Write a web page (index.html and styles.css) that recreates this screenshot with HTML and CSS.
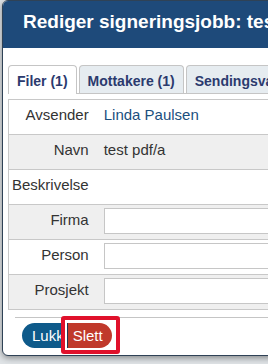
FILE: index.html
```html
<!DOCTYPE html>
<html lang="no">

<head>
    <meta charset="UTF-8">
    <meta name="viewport" content="width=device-width, initial-scale=1.0">
    <title>Rediger signeringsjobb</title>
    <link rel="stylesheet" href="styles.css">
</head>

<body>
    <div class="dialog">
        <div class="dialog-header">
            <span class="dialog-title">Rediger signeringsjobb: test pdf/a</span>
        </div>
        <div class="dialog-body">
            <ul class="tabs">
                <li class="tab active">Filer (1)</li>
                <li class="tab">Mottakere (1)</li>
                <li class="tab">Sendingsvalg</li>
            </ul>
            <div class="tab-panel">
                <table class="job-table">
                    <tr>
                        <td class="label">Avsender</td>
                        <td class="value sender">Linda Paulsen</td>
                    </tr>
                    <tr class="odd">
                        <td class="label">Navn</td>
                        <td class="value">test pdf/a</td>
                    </tr>
                    <tr>
                        <td class="label">Beskrivelse</td>
                        <td class="value"></td>
                    </tr>
                    <tr class="odd">
                        <td class="label">Firma</td>
                        <td class="field"><input type="text" class="text-input"></td>
                    </tr>
                    <tr>
                        <td class="label">Person</td>
                        <td class="field"><input type="text" class="text-input"></td>
                    </tr>
                    <tr class="odd">
                        <td class="label">Prosjekt</td>
                        <td class="field"><input type="text" class="text-input"></td>
                    </tr>
                </table>
            </div>
            <div class="button-pane">
                <button class="btn btn-close">Lukk</button>
                <span class="highlight">
                    <button class="btn btn-delete">Slett</button>
                </span>
            </div>
        </div>
    </div>
</body>

</html>
```

FILE: styles.css
```css
html,
body {
    margin: 0;
    font-family: "Liberation Sans", Arial, sans-serif;
    font-size: 15px;
    overflow: hidden;
}

body {
    background: #dfe3e6;
    height: 364px;
}

.dialog {
    width: 460px;
    margin-left: 2px;
    border: 1px solid #2f4256;
    border-radius: 6px;
    background: #fff;
    box-shadow: 0 2px 6px rgba(0, 0, 0, 0.4);
    overflow: hidden;
}

.dialog-header {
    background: #1e4a7a;
    padding: 10px 0 15px 20px;
    white-space: nowrap;
}

.dialog-title {
    color: #fff;
    font-size: 19px;
    font-weight: bold;
    line-height: 22px;
}

.dialog-body {
    padding: 17px 0 0 5px;
}

.tabs {
    display: flex;
    gap: 2px;
    margin: 0;
    padding: 0;
    list-style: none;
    border-bottom: 1px solid #c5c5c5;
}

.tab {
    height: 17px;
    padding: 7px 8px 3px;
    line-height: 17px;
    font-size: 14px;
    font-weight: bold;
    color: #2b3a6e;
    background: #e6ecf0;
    border: 1px solid #c5c5c5;
    border-bottom: none;
    border-radius: 4px 4px 0 0;
    white-space: nowrap;
}

.tab.active {
    background: #fff;
    margin-bottom: -1px;
    padding-bottom: 4px;
}

.tab-panel {
    padding-top: 5px;
}

.job-table {
    width: 480px;
    border-collapse: collapse;
    border: 1px solid #c8c8c8;
    color: #333;
}

.job-table tr {
    background: #fff;
    border-bottom: 1px solid #c8c8c8;
}

.job-table tr.odd {
    background: #efefef;
}

.job-table td {
    height: 28px;
    padding: 6px 0 0 7px;
    vertical-align: top;
    line-height: 17px;
}

.job-table td.label {
    width: 1px;
    padding: 6px 8px 0 3px;
    text-align: right;
    white-space: nowrap;
}

.job-table td.field {
    height: 31px;
    padding-top: 3px;
}

.sender {
    color: #1b4f7e;
}

.text-input {
    display: block;
    box-sizing: border-box;
    width: 100%;
    height: 26px;
    margin: 0;
    border: 1px solid #c6c6c6;
    background: #fff;
}

.button-pane {
    display: flex;
    align-items: flex-start;
    margin: 7px 0 0 7px;
    padding: 5px 0 7px 7px;
    border-top: 1px solid #c5c5c5;
}

.btn {
    height: 25px;
    border: none;
    margin: 0;
    font-family: "Liberation Sans", Arial, sans-serif;
    font-size: 15px;
    color: #fff;
    cursor: pointer;
}

.btn-close {
    padding: 0 10px;
    background: #0e5a8a;
    border-radius: 13px;
}

.highlight {
    display: flex;
    margin: -7px 0 -6px -13px;
    padding: 3px 4px 2px 2px;
    border: 4px solid #e0112b;
    border-radius: 3px;
    background: #fff;
}

.btn-delete {
    padding: 0 9px 0 5px;
    background: #c0392b;
    border-left: 1px solid #1c3552;
    border-radius: 0 13px 13px 0;
}
```
